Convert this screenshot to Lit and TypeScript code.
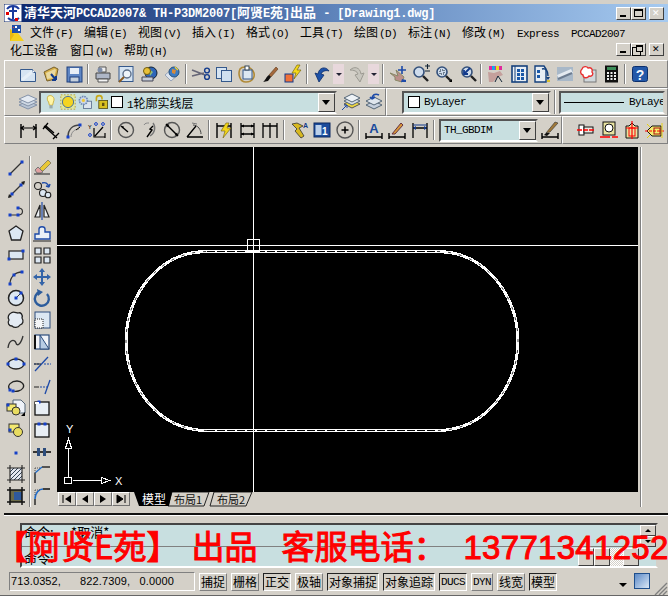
import { LitElement, html, css, svg } from "lit";
import { customElement } from "lit/decorators.js";

const B = "#1540c8";
const grip = (x: number, y: number) => svg`<rect x=${x - 1.5} y=${y - 1.5} width="3" height="3" fill=${B}/>`;
const lens = (x = 8, y = 8, r = 5) =>
  svg`<circle cx=${x} cy=${y} r=${r} fill="#cfdcec" stroke="#34507a" stroke-width="1.6"/><path d="M${x + r - 1} ${y + r - 1}l5 5" stroke="#222" stroke-width="2.4"/>`;
const dimBar = svg`<path d="M2 17h16M2 13v6M18 13v6" stroke="#000" stroke-width="1.4" fill="none"/>`;

const ICONS: Record<string, unknown> = {
  new: svg`<path d="M2.5 5.5h12l3 3v9h-15z" fill="#d6e4f2" stroke="#35598c"/><path d="M14.5 5.5v3h3" fill="#fff" stroke="#35598c"/><path d="M4 16l11-9" stroke="#eef4fa" stroke-width="3" opacity=".7"/>`,
  open: svg`<path d="M3 8l10-5 4 2-2 10-9 2z" fill="#d8b04a" stroke="#77602a"/><path d="M5 9l9-4 1 1-2 8-7 1z" fill="#e9d9a0"/><path d="M10 10l5 6m0 0v-4m0 4h-4" stroke="#123a8c" stroke-width="2" fill="none"/>`,
  save: svg`<rect x="3" y="3" width="15" height="15" fill="#5f86c4" stroke="#1f3f7c"/><rect x="6" y="4" width="9" height="6" fill="#e8eef6"/><rect x="6" y="13" width="9" height="5" fill="#c6d0dc" stroke="#1f3f7c"/>`,
  plot: svg`<path d="M6 3h7v5H6z" fill="#eee" stroke="#555"/><path d="M3 9h14v6H3z" fill="#aeb6c6" stroke="#444"/><path d="M5 15h10v3H5z" fill="#f4f4f4" stroke="#555"/><circle cx="7" cy="6" r="2.5" fill="#7d8ca8"/>`,
  preview: svg`<rect x="3" y="2.5" width="14" height="15" fill="#d6e4f2" stroke="#35598c"/><circle cx="11" cy="10" r="4" fill="#eef4fa" stroke="#5d6f8a" stroke-width="1.4"/><path d="M8 13l-5 5" stroke="#8a5a20" stroke-width="2"/>`,
  publish: svg`<circle cx="12" cy="9" r="6" fill="#2f66b8" stroke="#123"/><path d="M10 5l4 3-3 4z" fill="#8ec07a"/><circle cx="8" cy="7" r="3.5" fill="#e8c038" stroke="#705c10"/><path d="M3 13h11v4H3z" fill="#c4ccd8" stroke="#445"/>`,
  globe: svg`<path d="M3 11l8-7 6 6-8 7z" fill="#dde4ee" stroke="#98a4b8"/><circle cx="12" cy="8" r="5" fill="#3d7cc4" stroke="#26507c"/><path d="M10 5l4 1-1 4-3-1z" fill="#d88a38"/><path d="M13 3l3 3" stroke="#e8d040" stroke-width="1.5"/>`,
  cut: svg`<path d="M1 6l13 5M1 12l12-3" stroke="#667" stroke-width="1.6"/><circle cx="16" cy="6.5" r="2.4" fill="none" stroke="#123a8c" stroke-width="1.4"/><circle cx="16" cy="13" r="2.4" fill="none" stroke="#123a8c" stroke-width="1.4"/>`,
  copy: svg`<rect x="2.5" y="3.5" width="10" height="11" fill="#d6e4f2" stroke="#35598c"/><rect x="7.5" y="6.5" width="10" height="11" fill="#cfe0f0" stroke="#35598c"/>`,
  paste: svg`<path d="M3 5c2-3 10-3 13 2s0 11-7 11-8-9-6-13z" fill="none" stroke="#b08a38" stroke-width="1.6"/><rect x="6" y="6" width="9" height="9" fill="#dce7f2" stroke="#35598c"/><rect x="8" y="2" width="4" height="4" fill="#fff" stroke="#345"/>`,
  brush: svg`<path d="M16 3l-7 8 2 2 7-8z" fill="#a5683c" stroke="#5c3818" stroke-width=".6"/><path d="M9 11l2 2-3 4-5 1c2-1 3-5 6-7z" fill="#111"/>`,
  match: svg`<rect x="2" y="10" width="8" height="8" fill="#f07038" stroke="#123a8c"/><path d="M14 1l-5 8h4l-2 6 7-9h-4l3-5z" fill="#f4d818" stroke="#7c6a10" stroke-width=".7"/>`,
  undo: svg`<path d="M17 7c-3-5-10-4-11 3l-3-1 4 9 5-7-3-1c1-3 5-4 8-3z" fill="#1d52a8" stroke="#0c2c68" stroke-width=".8"/>`,
  redo: svg`<path d="M3 6c4-4 10-3 11 4l3-1-4 9-5-7 3-1c-1-3-4-4-8-4z" fill="#c8c6be" stroke="#9c9a92"/>`,
  pan: svg`<path d="M2 9l5 4 0 3 7 2 2-5-8-7 2 6z" fill="#bb8f8a" stroke="#886"/><path d="M14 2v8M10 6h8" stroke="#1d4aa8" stroke-width="1.6"/><path d="M14 15l4 1v2h-5z" fill="#1d4aa8"/>`,
  zplus: svg`${lens()}<path d="M14 2h5M16.5 0v5M14 7h5" stroke="#123" stroke-width="1.1"/>`,
  zwin: svg`${lens()}<rect x="6" y="6" width="4" height="4" fill="none" stroke="#123" stroke-dasharray="1 1"/><path d="M15 18l3-3v3z" fill="#000"/>`,
  zprev: svg`${lens(10, 8)}<path d="M13 4L7 10m0-4v4h4" stroke="#123a8c" stroke-width="1.8" fill="none"/>`,
  props: svg`<path d="M3 2h13v4H3z" fill="#e0289c"/><path d="M6 2h3v4H6z" fill="#18a8e8"/><path d="M10 2h3v4h-3z" fill="#e8e020"/><path d="M2 8l6 1 6-2 3 4-5 2-5 5H3z" fill="#c4a09c"/><path d="M12 12l-3 6m3-6l4 6" stroke="#123"/>`,
  dc: svg`<rect x="3" y="2" width="15" height="16" fill="#e8eef4" stroke="#14407c" stroke-width="1.6"/><path d="M6 2v16" stroke="#14407c"/><path d="M8 5h3v3H8zM12 5h3v3h-3zM8 9h3v3H8zM12 9h3v3h-3zM8 13h3v3H8zM12 13h3v3h-3z" fill="#1a58a8"/>`,
  tp: svg`<path d="M3 2h9l2 3v13H3z" fill="#e8eef4" stroke="#14407c" stroke-width="1.4"/><path d="M5 6h3v3H5zM5 11h3v3H5z" fill="#1a58a8"/><path d="M10 5c4-1 6 2 6 7" stroke="#14407c" stroke-width="1.5" fill="none"/><path d="M14 13h4l-2 3z" fill="#14407c"/><rect x="15" y="16" width="3" height="2" fill="#d8c030"/>`,
  sheet: svg`<rect x="2" y="3" width="16" height="14" fill="#a8b8c8"/><path d="M2 11l14-6 2 4-14 6z" fill="#e4eaf0"/><path d="M3 15l14-6" stroke="#6c7c90" stroke-width="2"/>`,
  markup: svg`<rect x="6" y="6" width="12" height="12" fill="#d0d8dc" stroke="#777"/><path d="M4 5c1-3 5-3 6-1 3-1 5 1 4 4 2 2 0 5-3 4-2 3-6 2-6-1-3-1-3-4-1-6z" fill="#fff" stroke="#e83030" stroke-width="1.4"/>`,
  calc: svg`<rect x="4" y="1.5" width="13" height="17" fill="#111"/><rect x="6" y="3" width="9" height="3" fill="#3c8c58"/><path d="M6 8h2v2H6zM9.500 8h2v2h-2zM13 8h2v2h-2zM6 11h2v2H6zM9.500 11h2v2h-2zM13 11h2v2h-2zM6 14h2v2H6zM9.500 14h2v2h-2zM13 14h2v2h-2z" fill="#eee"/>`,
  help: svg`<rect x="2.500" y="2.500" width="15" height="15" rx="2" fill="#2358a8" stroke="#0c2f6c"/><text x="10" y="15.500" font-size="14" font-weight="700" fill="#f2f6fb" text-anchor="middle" font-family="Liberation Sans">?</text>`,
  layers: svg`<path d="M1 13l9-4 9 4-9 4z" fill="#b8c4d4" stroke="#8492a8"/><path d="M1 10l9-4 9 4-9 4z" fill="#ced8e4" stroke="#8492a8"/><path d="M1 7l9-4 9 4-9 4z" fill="#e4eaf2" stroke="#8492a8"/>`,
  layerY: svg`<path d="M3 12l8-4 8 4-8 4z" fill="#f0d840" stroke="#555"/><path d="M3 9l8-4 8 4-8 4z" fill="#d8e0e8" stroke="#567"/><path d="M3 6l8-4 8 4-8 4z" fill="#eef2f6" stroke="#567"/><path d="M1 18l5-5m-3 0h3v3" stroke="#1d4aa8" fill="none"/>`,
  layerP: svg`<path d="M2 13l8-4 8 4-8 4z" fill="#c4cedc" stroke="#567"/><path d="M2 9l8-4 8 4-8 4z" fill="#dfe6ee" stroke="#567"/><path d="M15 3c-4-2-7 0-7 4m0 0l-2-2m2 2l3-2" stroke="#1d4aa8" stroke-width="1.6" fill="none"/>`,
  bulb: svg`<path d="M6 3c4-3 10 1 7 7l-1 4H8L7 10C5 8 5 5 6 3z" fill="#fff6a8" stroke="#c8a828"/><rect x="8" y="14" width="4" height="4" fill="#9aa"/>`,
  sun: svg`<rect x="1" y="1" width="18" height="18" fill="#dfe6a0" stroke="#b89820" stroke-dasharray="2 2"/><circle cx="10" cy="10" r="7" fill="#f4d420" stroke="#2a5ca0"/>`,
  gear: svg`<rect x="8" y="9" width="10" height="9" fill="#dce4ee" stroke="#55688a"/><circle cx="8" cy="8" r="5" fill="#cdd8e8" stroke="#6d88b4" stroke-width="2" stroke-dasharray="2 1"/><circle cx="8" cy="8" r="2" fill="#f0c838"/>`,
  lock: svg`<path d="M3 9V5c0-4 7-4 7 0v2" fill="none" stroke="#c8a818" stroke-width="2"/><rect x="6" y="8" width="11" height="10" fill="#d8c020" stroke="#504810"/><rect x="10" y="11" width="3" height="4" fill="#605010"/>`,
  dl: svg`<path d="M3 4v14M18 4v14" stroke="#000" stroke-width="1.4"/><path d="M3 8h15M6 6l-3 2 3 2M15 6l3 2-3 2" stroke="#000" stroke-width="1.200" fill="none"/>`,
  da: svg`<path d="M3 6l13 12M2 9l5-6M12 19l6-6M5 6l8 7" stroke="#000" stroke-width="1.300" fill="none"/>`,
  dcv: svg`<path d="M4 17c0-8 5-12 12-12" stroke="#444" stroke-width="1.600" fill="none"/><path d="M7 17c0-5 4-8 8-8" stroke="#888" fill="none"/>${grip(4, 17)}${grip(16, 5)}<path d="M12 10l4-3" stroke="#000"/>`,
  ord: svg`<text x="1" y="9" font-size="6" font-family="Liberation Mono" fill="#000">Y</text><circle cx="3" cy="15" r="1.400" fill="none" stroke="${B}"/><circle cx="9" cy="4" r="1.400" fill="none" stroke="${B}"/><circle cx="16" cy="4" r="1.400" fill="none" stroke="${B}"/><path d="M7 8v9H18M16 7l-8 9M18 13v5" stroke="#000" stroke-width="1.200" fill="none"/>`,
  dr: svg`<circle cx="10" cy="10" r="7.500" fill="none" stroke="#555" stroke-width="1.400"/><path d="M5 6l7 6" stroke="#000" stroke-width="1.400"/><path d="M5 6l3 .5-1 2z" fill="#000"/>`,
  dj: svg`<path d="M14 3c3 4 2 10-3 13" fill="none" stroke="#777" stroke-width="1.400"/><path d="M14 6l-3 3 2 1-5 7" stroke="#000" stroke-width="1.400" fill="none"/><path d="M5 5c1-2 3-2 5-2" stroke="#888" fill="none"/>`,
  dd: svg`<circle cx="10" cy="10" r="7.500" fill="none" stroke="#555" stroke-width="1.400"/><path d="M4 4l12 12" stroke="#000" stroke-width="1.400"/><path d="M4 4l3.500 .8-2.700 2.700zM16 16l-3.500-.8 2.700-2.700z" fill="#000"/>`,
  dang: svg`<path d="M2 17h16M2 17l9-11" stroke="#000" stroke-width="1.300" fill="none"/><path d="M8 5c5 0 8 5 8 9" stroke="#444" fill="none"/><path d="M7 3l5 1" stroke="#777"/>`,
  qd: svg`<path d="M3 3v15M17 3v15M3 6h14" stroke="#000" stroke-width="1.400"/><path d="M12 3l-5 8h4l-2 7 8-10h-4l2-5z" fill="#f2d41a" stroke="#6c5c10" stroke-width=".6"/>`,
  dbl: svg`<path d="M4 3v15M17 3v15M4 6h13M4 14h13" stroke="#000" stroke-width="1.300"/><path d="M4 6l3-1.500v3zM17 6l-3-1.500v3zM4 14l3-1.500v3zM17 14l-3-1.500v3z"/>`,
  dct: svg`<path d="M3 3v15M10 3v15M17 3v15M3 6h14" stroke="#000" stroke-width="1.300"/>`,
  tedit: svg`<path d="M3 4l5 5-2 2 6 7 3-2-5-8 4-2-6-3z" fill="#d8b820" stroke="#333" stroke-width=".8"/><text x="14" y="8" font-size="7" font-family="Liberation Sans" font-weight="700" fill="#123a8c">A</text>`,
  upd: svg`<rect x="2" y="3" width="16" height="14" fill="#1c4c9c" stroke="#0c2860"/><rect x="3.500" y="5" width="6" height="10" fill="#bcd0ea"/><text x="10" y="14.500" font-size="10" font-family="Liberation Sans" font-weight="700" fill="#fff">1</text>`,
  center: svg`<circle cx="10" cy="10" r="8" fill="none" stroke="#555" stroke-width="1.400"/><path d="M6.500 10h7M10 6.500v7" stroke="#000" stroke-width="1.500"/>`,
  ta: svg`${dimBar}<text x="10" y="13" font-size="13" font-family="Liberation Sans" font-weight="700" fill="#1a4a9c" text-anchor="middle">A</text>`,
  tb: svg`${dimBar}<path d="M5 14l9-11 2 2-8 9z" fill="#d89838" stroke="#634"/>`,
  tc: svg`<path d="M3 3v15M17 3v15M3 8h14" stroke="#000" stroke-width="1.300"/><path d="M3 8l3-2v4zM17 8l-3-2v4z" fill="#123a8c"/><path d="M3 5h14" stroke="#123a8c"/>`,
  te: svg`${dimBar}<path d="M6 13l9-11 3 1-8 9z" fill="#a07838" stroke="#333" stroke-width=".6"/><path d="M6 13l4 0-3 3-3-1z" fill="#111"/>`,
  r1: svg`<rect x="3" y="5" width="5" height="10" fill="#fff" stroke="#111"/><rect x="8" y="7" width="9" height="6" fill="#e8e8e0" stroke="#111"/><path d="M1 10h18" stroke="#f00" stroke-width="1.400" stroke-dasharray="5 1"/>`,
  r2: svg`<rect x="4" y="2" width="12" height="13" fill="#e8e2a0" stroke="#111"/><circle cx="10" cy="8" r="4" fill="#fff" stroke="#111"/><path d="M1 17h18" stroke="#f00" stroke-width="1.400" stroke-dasharray="10 2"/>`,
  r3: svg`<path d="M4 6h3l3-3 3 3h3v12H4z" fill="#e8e2a0" stroke="#111"/><path d="M10 1v18M4 8h12" stroke="#f00" stroke-width="1.200"/><rect x="7" y="8" width="6" height="8" fill="none" stroke="#f00"/>`,
  r4: svg`<path d="M2 11l5-5h9v10H7z" fill="#f2ec70" stroke="#111"/><path d="M0 11h20" stroke="#f00" stroke-width="1.200" stroke-dasharray="3 1"/><rect x="9" y="8" width="6" height="6" fill="none" stroke="#a11"/><path d="M2 4l3 3M2 18l3-3M17 3v15" stroke="#e8d010"/>`,
  line: svg`<path d="M4 17L16 5" stroke="#333" stroke-width="1.200"/>${grip(4, 17)}${grip(16, 5)}`,
  xline: svg`<path d="M3 18L18 3" stroke="#333" stroke-width="1.200"/>${grip(6, 15)}${grip(15, 6)}<path d="M2 19l4-1-3-3zM19 2l-4 1 3 3z" fill="#222"/>`,
  pline: svg`<path d="M4 14h8c6 0 6-7 0-7" stroke="#333" stroke-width="1.200" fill="none"/>${grip(4, 14)}${grip(12, 14)}${grip(12, 7)}`,
  poly: svg`<path d="M10 3l7 5-2.500 9h-9L3 8z" fill="#dce7f2" stroke="#222" stroke-width="1.300"/>`,
  rect: svg`<rect x="3" y="6" width="14" height="8" fill="#dce7f2" stroke="#222" stroke-width="1.200"/>${grip(3, 14)}${grip(17, 6)}`,
  arc: svg`<path d="M4 17c0-7 5-12 12-12" stroke="#333" stroke-width="1.300" fill="none"/>${grip(4, 17)}${grip(8, 8)}${grip(16, 5)}`,
  circle: svg`<circle cx="10" cy="10" r="7.500" fill="#dce7f2" stroke="#222" stroke-width="1.500"/><path d="M10 10l5-5" stroke="#333"/>${grip(10, 10)}${grip(15, 5)}`,
  cloud: svg`<path d="M5 3c3-2 5 0 7 0 3-1 5 2 4 5 2 3 1 6-2 7-2 3-6 3-8 1-3 0-5-3-3-6-2-3 0-6 2-7z" fill="#e4ebf3" stroke="#222" stroke-width="1.300"/>`,
  spline: svg`<path d="M2 16c1-9 7-9 8-5s5 1 7-7" stroke="#333" stroke-width="1.300" fill="none"/>`,
  ell: svg`<ellipse cx="10" cy="10" rx="8" ry="5" fill="#dce7f2" stroke="#222" stroke-width="1.300"/>${grip(2, 10)}${grip(18, 10)}${grip(10, 5)}`,
  ellarc: svg`<path d="M4 14C0 9 6 5 11 5s8 4 6 7-7 4-10 3" fill="none" stroke="#222" stroke-width="1.300"/>${grip(4, 14)}${grip(7, 15)}`,
  ins: svg`<path d="M7 2h8l4 4v9H7z" fill="#eef2f8" stroke="#567"/><rect x="1" y="6" width="9" height="7" fill="#f2e870" stroke="#333"/><circle cx="10" cy="13" r="4" fill="#e8dc60" stroke="#333"/>${grip(2, 7)}<path d="M15 18l4-4v4z" fill="#000"/>`,
  block: svg`<rect x="3" y="4" width="10" height="8" fill="#f2e870" stroke="#333"/><circle cx="12" cy="12" r="4.500" fill="#e8dc60" stroke="#333"/>${grip(4, 10)}`,
  point: svg`${grip(10, 11)}`,
  hatch: svg`<rect x="4" y="4" width="12" height="12" fill="#e4e8f0"/><path d="M4 8l4-4M4 12l8-8M4 16L16 4M8 16l8-8M12 16l4-4" stroke="#345" /><path d="M4 1v18M16 1v18M1 4h18M1 16h18" stroke="#222" stroke-width="1.100"/>`,
  region: svg`<rect x="4" y="4" width="12" height="12" fill="#6a6a48"/><rect x="8" y="6" width="8" height="8" fill="#2f5a9c"/><path d="M4 1v18M16 1v18M1 4h18M1 16h18" stroke="#111" stroke-width="1.500"/>`,
  erase: svg`<path d="M8 11l8-8 3 3-8 8H7z" fill="#e8c838" stroke="#555" stroke-width=".6"/><path d="M6 10l5 5-2 1H5l-2-3z" fill="#e0a0a0" stroke="#777"/><path d="M2 17h16" stroke="#222"/>`,
  cop: svg`<circle cx="6" cy="7" r="3.500" fill="none" stroke="#222" stroke-width="1.100"/><circle cx="11" cy="14" r="3.500" fill="#dce7f2" stroke="#222" stroke-width="1.100"/><circle cx="16" cy="16" r="2.800" fill="#dce7f2" stroke="#222" stroke-width="1.100"/><path d="M10 4c3-1 6 0 7 4m0 0l-3-1m3 1l1-3" stroke="#1d4aa8" stroke-width="1.400" fill="none"/>`,
  mirror: svg`<path d="M8 4v12H3zM12 4v12h5z" fill="#eef2f6" stroke="#222" stroke-width="1.200"/><path d="M10 1v18" stroke="#1d4aa8" stroke-width="1.200"/>`,
  offset: svg`<path d="M3 16v-5h4V6c0-3 6-3 6 0v3h5v7z" fill="#eaf0f6" stroke="#1d4aa8" stroke-width="1.400"/><path d="M1 18h18" stroke="#222"/>`,
  array: svg`<path d="M3 3h6v6H3zM12 3h6v6h-6zM3 12h6v6H3zM12 12h6v6h-6z" fill="#dce7f2" stroke="#222" stroke-width="1.200"/>`,
  move: svg`<path d="M10 1l3 4h-2v4h4V7l4 3-4 3v-2h-4v4h2l-3 4-3-4h2v-4H5v2l-4-3 4-3v2h4V5H7z" fill="#3464a8"/>`,
  rot: svg`<path d="M8 4a7 7 0 1 0 7 2" fill="none" stroke="#2c5c9c" stroke-width="2.400"/><path d="M5 1l6 3-5 4z" fill="#2c5c9c"/>`,
  scale: svg`<rect x="3" y="2" width="15" height="16" fill="#dce7f2" stroke="#2c4c7c"/><rect x="3" y="9" width="8" height="9" fill="#f4f6f8" stroke="#222" stroke-dasharray="1 1"/>`,
  stretch: svg`<rect x="3" y="3" width="14" height="14" fill="#f2f4f8" stroke="#2c4c7c" stroke-width="1.200"/><path d="M8 3l9 14H8z" fill="#b8cce4" stroke="#2c4c7c"/><path d="M3 3v14" stroke="#111" stroke-width="2"/>`,
  trim: svg`<path d="M3 17L16 3" stroke="#1d4aa8" stroke-width="1.300"/><path d="M2 10h6M12 10h7" stroke="#1d4aa8" stroke-dasharray="2 1"/><path d="M2 10h7" stroke="#222"/>`,
  extend: svg`<path d="M13 18L18 4" stroke="#1d4aa8" stroke-width="1.300"/><path d="M2 11h5" stroke="#222"/><path d="M8 11h8" stroke="#1d4aa8" stroke-dasharray="2 1"/>`,
  brk: svg`<rect x="3" y="4" width="14" height="13" fill="#e8eef4" stroke="#111" stroke-width="1.300"/>${grip(7, 4)}<rect x="3" y="4" width="4" height="2" fill="#fff"/>`,
  brk2: svg`<rect x="3" y="4" width="14" height="13" fill="#e8eef4" stroke="#111" stroke-width="1.300"/>${grip(7, 4)}${grip(13, 4)}`,
  join: svg`<path d="M1 10h18" stroke="#111" stroke-width="1.600"/><path d="M5 6h3v8H5zM11 6h3v8h-3z" fill="#2c4c7c"/>`,
  chamfer: svg`<path d="M3 19V9" stroke="#111" stroke-width="1.300"/><path d="M10 3h8" stroke="#111" stroke-width="1.300"/><path d="M3 9l7-6" stroke="#1d6ac8" stroke-width="1.300"/><path d="M3 4h6M3 4v5" stroke="#555" stroke-dasharray="1 1"/>`,
  fillet: svg`<path d="M3 19v-6M11 3h7" stroke="#111" stroke-width="1.300"/><path d="M3 13c0-6 4-10 8-10" stroke="#1d6ac8" stroke-width="1.600" fill="none"/><path d="M3 4h6M3 4v6" stroke="#555" stroke-dasharray="1 1"/>`,
};

const ic = (n: string) => html`<svg class="ic" viewBox="0 0 20 20">${ICONS[n]}</svg>`;
const btn = (n: string) => html`<span class="b">${ic(n)}</span>`;
const sep = html`<span class="sep"></span>`;
const drop = html`<span class="dd"></span>`;
const winBtn = (k: string) => html`<span class="wb ${k}"></span>`;

const dock = [
  ["line", "erase"], ["xline", "cop"], ["pline", "mirror"], ["poly", "offset"],
  ["rect", "array"], ["arc", "move"], ["circle", "rot"], ["cloud", "scale"],
  ["spline", "stretch"], ["ell", "trim"], ["ellarc", "extend"], ["ins", "brk"],
  ["block", "brk2"], ["point", "join"], ["hatch", "chamfer"], ["region", "fillet"],
];

const menu1: [string, string][] = [
  ["文件", "(F)"], ["编辑", "(E)"], ["视图", "(V)"], ["插入", "(I)"], ["格式", "(O)"],
  ["工具", "(T)"], ["绘图", "(D)"], ["标注", "(N)"], ["修改", "(M)"], ["", "Express"], ["", "PCCAD2007"],
];

const status: [string, string, string][] = [
  ["捕捉", "cn w28", ""], ["栅格", "cn w28", ""], ["正交", "cn w28", "on"], ["极轴", "cn w28", ""],
  ["对象捕捉", "cn w52", "on"], ["对象追踪", "cn w52", "on"], ["DUCS", "lt w28", "on"],
  ["DYN", "lt w22", ""], ["线宽", "cn w28", ""], ["模型", "cn w28", "on"],
];

@customElement("app-root")
export class AppRoot extends LitElement {
  static styles = css`
    :host { display: block; width: 668px; height: 596px; overflow: hidden; position: relative; background: #d4d0c8; font-family: "Noto Sans CJK SC", sans-serif; color: #000; }
    .ic { width: 20px; height: 20px; display: block; flex: none; }
    .title { margin: 4px 0 0 4px; height: 18px; display: flex; align-items: center; background: linear-gradient(90deg, #0a246a 0%, #5f84bb 50%, #a6caf0 100%); color: #fff; }
    .ttext { font: bold 12px/18px "Liberation Mono", monospace; white-space: pre; letter-spacing: -.2px; flex: none; }
    .ttext b { font: bold 13px/18px "Noto Sans CJK SC", sans-serif; letter-spacing: 0; }
    .logo { width: 18px; height: 18px; flex: none; margin-right: 2px; }
    .ctl { margin-left: auto; display: flex; padding-right: 4px; }
    .wb { width: 15px; height: 13px; box-sizing: border-box; background: #d4d0c8; border: 1px solid; border-color: #fff #404040 #404040 #fff; position: relative; display: block; }
    .wb.cl { margin-left: 3px; }
    .wb::after { content: ""; position: absolute; }
    .wb.mn::after { left: 3px; bottom: 2px; width: 6px; height: 2px; background: #000; }
    .wb.mx::after { left: 2px; top: 1px; width: 7px; height: 5px; border: 1px solid #000; border-top-width: 2px; }
    .wb.rs::after { left: 4px; top: 1px; width: 5px; height: 4px; border: 1px solid #000; border-top-width: 2px; box-shadow: -3px 3px 0 -0px #d4d0c8, -3px 3px 0 1px #000; }
    .wb.cl::after { left: 2px; top: 0; content: "✕"; font: bold 9px/11px "DejaVu Sans", sans-serif; }
    .mrow { display: flex; align-items: center; height: 18px; font-size: 12px; line-height: 18px; white-space: nowrap; }
    .r1 { padding: 1px 0 0 9px; }
    .r2 { padding-left: 10px; position: relative; }
    .appic { width: 16px; height: 17px; flex: none; margin-right: 5px; }
    .m { width: 54px; flex: none; }
    .m.f { width: 60px; }
    .m i, .lt { font: 11px "Liberation Mono", monospace; letter-spacing: -.6px; }
    .m i { margin-left: 1px; }
    .r2 .ctl { position: absolute; right: 0; top: 2px; }
    .bar { display: flex; margin-left: 4px; height: 28px; }
    .t1 { margin-top: 1px; }
    .sec { display: flex; align-items: center; box-sizing: border-box; height: 28px; border: 1px solid; border-color: #fff #808080 #808080 #fff; padding-left: 11px; flex: none; white-space: nowrap; }
    .b { width: 23px; height: 22px; display: flex; align-items: center; justify-content: center; flex: none; }
    .sep { width: 2px; height: 20px; margin: 0 2px; border-left: 1px solid #808080; border-right: 1px solid #fff; box-sizing: border-box; flex: none; }
    .dd { width: 11px; height: 20px; flex: none; background: #e8d8dc; position: relative; margin-right: 1px; }
    .dd::after { content: ""; position: absolute; left: 3px; top: 9px; border: 3px solid transparent; border-top-color: #223; }
    .grow { flex: 1; }
    .nopad-r { padding-right: 0; }
    .nopad-l { padding-left: 0; }
    .combo { display: flex; align-items: center; height: 23px; box-sizing: border-box; border: 2px solid; border-color: #555 #d4d0c8 #fff #555; background: #c8dfe0; font: 11px "Liberation Mono", monospace; letter-spacing: -.6px; flex: none; overflow: hidden; padding-left: 2px; white-space: pre; }
    .combo .arrow { margin-left: auto; width: 17px; height: 19px; flex: none; box-sizing: border-box; background: #d4d0c8; border: 1px solid; border-color: #fff #404040 #404040 #fff; position: relative; }
    .arrow::after { content: ""; position: absolute; left: 3px; top: 6px; border: 4px solid transparent; border-top: 5px solid #000; border-bottom: 0; }
    .c-layer { width: 298px; margin-right: 2px; }
    .c-layer .ic { width: 16px; height: 16px; margin-right: 1px; }
    .swatch { width: 10px; height: 10px; background: #fff; border: 1px solid #000; margin: 0 4px 0 0; flex: none; }
    .lname { font: 12px "Noto Sans CJK SC", sans-serif; letter-spacing: 0; }
    .lname u { text-decoration: none; font: 11px "Liberation Mono", monospace; }
    .c-color { width: 149px; margin-left: 15px; padding-left: 4px; }
    .vs { height: 24px; margin: 0 0 0 3px; }
    .c-lt { width: 106px; margin-left: 3px; padding-left: 3px; }
    .ltline { width: 60px; height: 1px; background: #000; margin-right: 5px; flex: none; }
    .c-dim { width: 99px; margin-left: 2px; padding-left: 3px; }
    .main { display: flex; height: 363px; }
    .dock { width: 57px; flex: none; display: grid; grid-template-columns: 30px 27px; grid-auto-rows: 21.93px; padding-top: 12px; box-sizing: border-box; }
    .dock .b { width: 24px; height: 21.930px; }
    .dcell { border-right: 1px solid #808080; box-shadow: 1px 0 0 #fff; padding-left: 3px; box-sizing: border-box; }
    .dcell .b { width: 26px; }
    .view { width: 581px; margin-top: 3px; flex: none; }
    .cv { display: block; width: 581px; height: 345px; background: #000; }
    .tabs { display: flex; height: 15px; align-items: flex-start; padding-left: 1px; }
    .nav { width: 18px; height: 14px; box-sizing: border-box; flex: none; border: 1px solid; border-color: #fff #707070 #707070 #fff; }
    .nav svg { display: block; width: 16px; height: 12px; }
    .tabsvg { display: block; width: 130px; height: 15px; flex: none; margin-left: 4px; }
    .gutter { flex: 1; border-left: 1px solid #808080; box-shadow: inset 1px 0 0 #fff; margin: 3px 0 0 2px; }
    .rule { margin: 6px 0 8px 4px; height: 2px; background: #111; box-shadow: 0 1px 0 #fff; }
    .cmdrow { margin: 0 10px 0 20px; height: 45px; box-sizing: border-box; border: 2px solid; border-color: #444 #d4d0c8 #fff #444; background: #c8dfe0; position: relative; font-size: 13px; }
    .cl1, .cl2 { height: 22px; padding-left: 2px; white-space: pre; box-sizing: border-box; }
    .cl1 { border-bottom: 1px solid #808080; line-height: 14px; }
    .cl2 { padding-top: 3px; line-height: 16px; }
    .sb { position: absolute; right: 0; top: 0; width: 16px; display: block; }
    .sb span, .hs span { display: block; box-sizing: border-box; background: #d4d0c8; border: 1px solid; border-color: #fff #404040 #404040 #fff; position: relative; }
    .sb span { height: 11px; }
    .tri::after { content: ""; position: absolute; left: 4px; top: 3px; border: 3px solid transparent; }
    .tri.u::after { border-bottom-color: #000; border-top: 0; }
    .tri.d::after { border-top-color: #000; border-bottom: 0; }
    .hs { position: absolute; right: 17px; bottom: 0; display: flex; height: 18px; }
    .hs span { width: 16px; height: 18px; }
    .hs .track { width: 13px; border: 0; background: repeating-conic-gradient(#fff 0 25%, #d4d0c8 0 50%) 0 0/2px 2px; }
    .banner { position: absolute; left: -5px; top: 523px; font: 400 33px/44px "Noto Sans CJK SC", sans-serif; color: #f00; -webkit-text-stroke: 1px #f00; white-space: nowrap; }
    .banner .g1 { margin-left: 12px; }
    .banner .g2 { margin-left: 24px; }
    .banner .num { margin-left: 17px; font-family: "Liberation Sans", sans-serif; letter-spacing: .3px; }
    .status { display: flex; align-items: center; height: 28px; padding-left: 9px; border-bottom: 1px solid #666; box-sizing: border-box; }
    .coord { width: 186px; height: 19px; box-sizing: border-box; border: 1px solid; border-color: #808080 #fff #fff #808080; font: 11px/17px "Liberation Sans", sans-serif; padding-left: 1px; white-space: pre; flex: none; margin-right: 4px; letter-spacing: .12px; }
    .sbtn { height: 18px; box-sizing: border-box; flex: none; margin-right: 4px; text-align: center; border: 1px solid; border-color: #fff #808080 #808080 #fff; white-space: nowrap; overflow: hidden; }
    .sbtn.on { border-color: #222 #fff #fff #222; }
    .cn { font-size: 12px; line-height: 16px; }
    .lt { line-height: 16px; }
    .w28 { width: 28px; } .w52 { width: 52px; } .w22 { width: 22px; }
    .tail { margin-left: auto; display: flex; align-items: center; position: relative; height: 26px; }
    .tdrop { border: 4px solid transparent; border-top: 4px solid #000; border-bottom: 0; margin: 6px 7px 0 0; }
    .tray { width: 16px; height: 16px; background: linear-gradient(135deg, #5c8ac8, #dbe8f5); border: 1px solid #1f4f8c; box-sizing: border-box; flex: none; margin: -1px 3px 0 0; }
    .gripbox { width: 15px; height: 13px; flex: none; align-self: flex-end; display: block; }
  `;

  render() {
    return html`
      <div class="title">
        <svg class="logo" viewBox="0 0 18 18"><rect width="18" height="18" fill="#fff"/><rect x="0" y="0" width="18" height="18" fill="none" stroke="#0a246a"/><path d="M3 5c3-4 9-4 12 0M4 14c3 3 8 3 11 0" stroke="#1a3a9c" stroke-width="2" fill="none"/><path d="M5 7h8M9 3v12" stroke="#1a3a9c" stroke-width="2"/><rect x="11" y="14" width="3" height="3" fill="#e00000"/><rect x="2" y="8" width="3" height="3" fill="#e00000"/></svg>
        <span class="ttext"><b>清华天河</b>PCCAD2007& TH-P3DM2007[<b>阿贤</b>E<b>苑</b>]<b>出品</b> - [Drawing1.dwg]</span>
        <span class="ctl">${winBtn("mn")}${winBtn("mx")}${winBtn("cl")}</span>
      </div>
      <div class="mrow r1">
        <svg class="appic" viewBox="0 0 16 17"><path d="M1 17V5l8 4 6 8z" fill="#f4d020"/><path d="M1 17V5l4 6z" fill="#e8b810"/><path d="M3 1h9v8H3z" fill="#1e4ea8"/><path d="M6 2h2v2H6zM9 5h2v2H9z" fill="#fff"/><path d="M4 3h1v1H4z" fill="#e33"/></svg>
        ${menu1.map(([a, b]) => html`<span class="m">${a}<i>${b}</i></span>`)}
      </div>
      <div class="mrow r2">
        <span class="m f">化工设备</span><span class="m">窗口<i>(W)</i></span><span class="m">帮助<i>(H)</i></span>
        <span class="ctl">${winBtn("mn")}${winBtn("rs")}${winBtn("cl")}</span>
      </div>
      <div class="bar t1">
        <div class="sec grow nopad-r">
          ${btn("new")}${btn("open")}${btn("save")}${sep}
          ${btn("plot")}${btn("preview")}${btn("publish")}${btn("globe")}${sep}
          ${btn("cut")}${btn("copy")}${btn("paste")}${btn("brush")}${btn("match")}${sep}
          ${btn("undo")}${drop}${btn("redo")}${drop}${sep}
          ${btn("pan")}${btn("zplus")}${btn("zwin")}${btn("zprev")}${sep}
          ${btn("props")}${btn("dc")}${btn("tp")}${btn("sheet")}${btn("markup")}${btn("calc")}${sep}
          ${btn("help")}
        </div>
      </div>
      <div class="bar">
        <div class="sec">
          ${btn("layers")}
          <div class="combo c-layer">
            ${ic("bulb")}${ic("sun")}${ic("gear")}${ic("lock")}
            <span class="swatch"></span><span class="lname"><u>1</u>轮廓实线层</span>
            <span class="arrow"></span>
          </div>
          ${btn("layerY")}${btn("layerP")}
        </div>
        <div class="sec grow nopad-l">
          <div class="combo c-color"><span class="swatch"></span><span>ByLayer</span><span class="arrow"></span></div>
          <span class="sep vs"></span>
          <div class="combo c-lt"><span class="ltline"></span><span>ByLayer</span></div>
        </div>
      </div>
      <div class="bar">
        <div class="sec">
          ${btn("dl")}${btn("da")}${btn("dcv")}${btn("ord")}${sep}
          ${btn("dr")}${btn("dj")}${btn("dd")}${btn("dang")}${sep}
          ${btn("qd")}${btn("dbl")}${btn("dct")}${sep}
          ${btn("tedit")}${btn("upd")}${btn("center")}${sep}
          ${btn("ta")}${btn("tb")}${btn("tc")}${sep}
          <div class="combo c-dim"><span>TH_GBDIM</span><span class="arrow"></span></div>
          ${btn("te")}
        </div>
        <div class="sec grow">
          ${btn("r1")}${btn("r2")}${btn("r3")}${btn("r4")}
        </div>
      </div>
      <div class="main">
        <div class="dock">
          ${dock.map(([a, b]) => html`<div class="dcell"><span class="b">${ic(a)}</span></div><span class="b">${ic(b)}</span>`)}
        </div>
        <div class="view">
          <svg class="cv" viewBox="57 147 581 345" shape-rendering="crispEdges">
            <path d="M207 251.500H437C485 251.500 518 295 518 341C518 387 485 430.500 437 430.500H207C159 430.500 126 387 126 341C126 295 159 251.500 207 251.500Z" fill="none" stroke="#fff" stroke-width="3"/>
            <path d="M207 251.500H437M207 430.500H437" stroke="#000" stroke-width="1" stroke-dasharray="8 2"/>
            <path d="M437 251.500C485 251.500 518 295 518 341C518 387 485 430.500 437 430.500M207 430.500C159 430.500 126 387 126 341C126 295 159 251.500 207 251.500" fill="none" stroke="#000" stroke-width=".8" stroke-dasharray="3 8" shape-rendering="auto"/>
            <path d="M57 245.500H638M253.500 147V492" stroke="#fff"/>
            <rect x="247.500" y="239.500" width="12" height="12" fill="none" stroke="#fff"/>
            <path d="M68.500 442V477M73 480.500H102" stroke="#fff"/>
            <rect x="64.500" y="477.500" width="7" height="6" fill="none" stroke="#fff"/>
            <path d="M68.500 439l3 9h-6z" fill="#000" stroke="#fff"/>
            <path d="M101.500 477.500l8 3-8 3z" fill="#000" stroke="#fff"/>
            <text x="115" y="485" font-size="11" fill="#fff" font-family="Liberation Sans">X</text>
            <text x="66" y="433" font-size="11" fill="#fff" font-family="Liberation Sans">Y</text>
          </svg>
          <div class="tabs">
            <span class="nav"><svg viewBox="0 0 16 12"><path d="M12 2v8L6 6z"/><path d="M4 2v8" stroke="#000"/></svg></span>
            <span class="nav"><svg viewBox="0 0 16 12"><path d="M11 2v8L5 6z"/></svg></span>
            <span class="nav"><svg viewBox="0 0 16 12"><path d="M5 2v8l6-4z"/></svg></span>
            <span class="nav"><svg viewBox="0 0 16 12"><path d="M4 2v8l6-4zM12 2v8" stroke="#000"/></svg></span>
            <svg class="tabsvg" viewBox="0 0 130 15">
              <path d="M80 0l-4 14h36l6-14z" fill="#d4d0c8" stroke="#222"/>
              <path d="M38 0l-4 14h36l5-14z" fill="#d4d0c8" stroke="#222"/>
              <path d="M0 0l5 14h30l3-14z" fill="#000"/>
              <text x="8" y="12" font-size="12" fill="#fff" font-family="Noto Sans CJK SC">模型</text>
              <text x="40" y="12" font-size="11" fill="#111" font-family="Noto Sans CJK SC">布局1</text>
              <text x="83" y="12" font-size="11" fill="#111" font-family="Noto Sans CJK SC">布局2</text>
            </svg>
          </div>
        </div>
        <div class="gutter"></div>
      </div>
      <div class="rule"></div>
      <div class="cmdrow">
        <div class="cl1">命令:      *取消*</div>
        <div class="cl2">命令:</div>
        <div class="sb"><span class="tri u"></span><span class="tri d"></span></div>
        <div class="hs"><span class="tri"></span><span></span><span class="track"></span><span></span></div>
      </div>
      <div class="banner">【阿贤E苑】<span class="g1">出品</span><span class="g2">客服电话：</span><span class="num">13771341252</span></div>
      <div class="status">
        <div class="coord">713.0352,      822.7309,   0.0000</div>
        ${status.map(([t, c, on]) => html`<div class="sbtn ${c} ${on}">${t}</div>`)}
        <div class="tail">
          <span class="tdrop"></span><span class="tray"></span>
          <svg class="gripbox" viewBox="0 0 15 13"><path d="M14 1L2 13M14 5L6 13M14 9l-4 4" stroke="#808080" stroke-width="1.400"/></svg>
        </div>
      </div>
    `;
  }
}
